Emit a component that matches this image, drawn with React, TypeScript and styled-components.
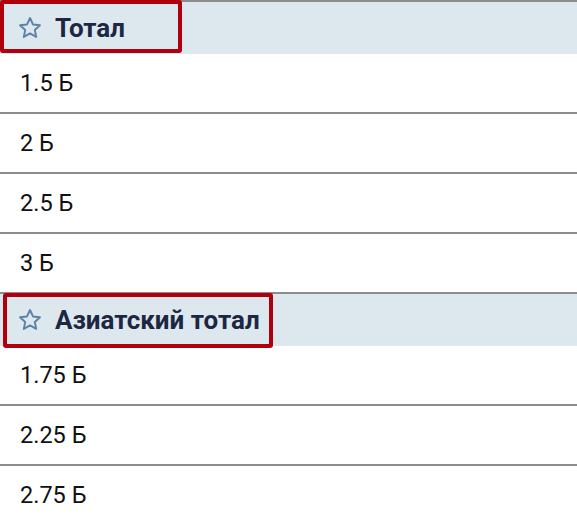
import styled, { createGlobalStyle } from "styled-components";

const GlobalStyle = createGlobalStyle`
  html, body {
    margin: 0;
    padding: 0;
    background: #ffffff;
  }
  body {
    font-family: Roboto, "Liberation Sans", Arial, sans-serif;
  }
`;

const List = styled.div`
  width: 577px;
  height: 524px;
  overflow: hidden;
  background: #ffffff;
`;

const Header = styled.div`
  position: relative;
  display: flex;
  align-items: center;
  column-gap: 12px;
  height: 52px;
  padding-left: 17px;
  border-top: 2px solid #8c8c8c;
  background: #dce7ee;
  color: #1d2742;
  font-size: 26px;
  font-weight: 700;
`;

const Highlight = styled.span<{ $top: number; $left: number; $width: number; $height: number }>`
  position: absolute;
  top: ${(p) => p.$top}px;
  left: ${(p) => p.$left}px;
  width: ${(p) => p.$width}px;
  height: ${(p) => p.$height}px;
  box-sizing: border-box;
  border: 4px solid #b0000e;
  border-radius: 3px;
  pointer-events: none;
`;

const Row = styled.div`
  display: flex;
  align-items: center;
  height: 58px;
  padding-left: 20px;
  border-bottom: 2px solid #8c8c8c;
  font-size: 23.5px;
  color: #111111;
  &:last-child {
    border-bottom: none;
  }
`;

const Star = () => (
  <svg width="26" height="26" viewBox="0 0 24 24" fill="none">
    <path
      d="M12 2.8l2.75 5.9 6.45.75-4.78 4.4 1.27 6.38L12 17.05 6.31 20.23l1.27-6.38L2.8 9.45l6.45-.75z"
      stroke="#5b84a6"
      strokeWidth="1.8"
      strokeLinejoin="round"
    />
  </svg>
);

const sections = [
  {
    title: "Тотал",
    box: { top: -2, left: 0, width: 182, height: 53 },
    rows: ["1.5 Б", "2 Б", "2.5 Б", "3 Б"],
  },
  {
    title: "Азиатский тотал",
    box: { top: -1, left: 3, width: 270, height: 55 },
    rows: ["1.75 Б", "2.25 Б", "2.75 Б"],
  },
];

const App = () => {
  return (
    <List>
      <GlobalStyle />
      {sections.map((s) => (
        <section key={s.title}>
          <Header>
            <Star />
            {s.title}
            <Highlight $top={s.box.top} $left={s.box.left} $width={s.box.width} $height={s.box.height} />
          </Header>
          {s.rows.map((r) => (
            <Row key={r}>{r}</Row>
          ))}
        </section>
      ))}
    </List>
  );
};

export default App;
